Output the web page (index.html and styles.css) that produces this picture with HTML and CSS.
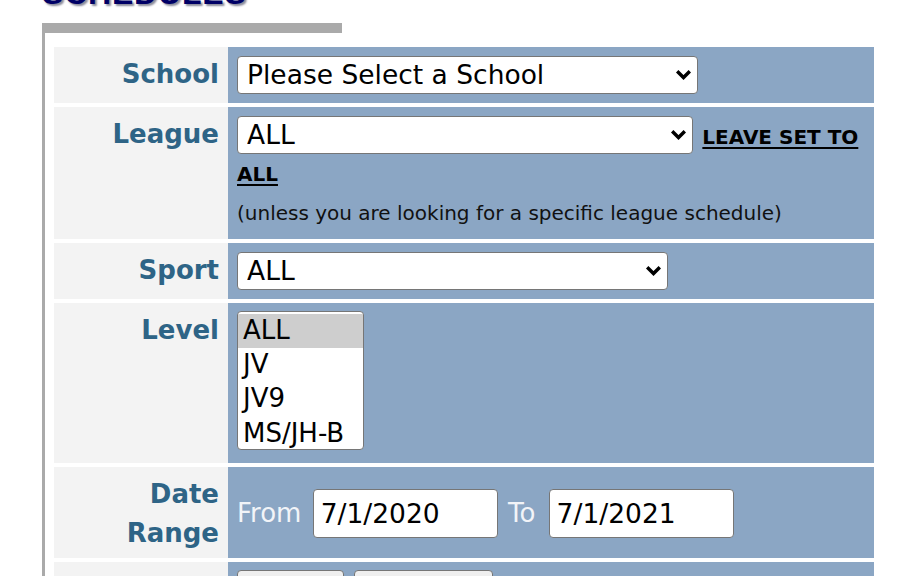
FILE: index.html
```html
<!DOCTYPE html>
<html>
<head>
<meta charset="utf-8">
<link rel="stylesheet" href="styles.css">
</head>
<body>
<h1 class="page-title">SCHEDULES</h1>
<div class="panel-bar"></div>
<div class="panel">
  <table class="search">
    <tr>
      <td class="lbl">School</td>
      <td class="val">
        <span class="sel sel-block sel-school">
          <select class="dd"><option>Please Select a School</option></select>
          <svg class="chev" viewBox="0 0 17 11" width="17" height="11"><path d="M2.2 2.2 L8.5 8.5 L14.8 2.2" fill="none" stroke="#000" stroke-width="3.4"/></svg>
        </span>
      </td>
    </tr>
    <tr>
      <td class="lbl">League</td>
      <td class="val league">
        <span class="sel sel-league">
          <select class="dd"><option>ALL</option></select>
          <svg class="chev" viewBox="0 0 17 11" width="17" height="11"><path d="M2.2 2.2 L8.5 8.5 L14.8 2.2" fill="none" stroke="#000" stroke-width="3.4"/></svg>
        </span>
        <a class="leave" href="#">LEAVE SET TO ALL</a><br>
        <span class="note">(unless you are looking for a specific league schedule)</span>
      </td>
    </tr>
    <tr>
      <td class="lbl">Sport</td>
      <td class="val">
        <span class="sel sel-block sel-sport">
          <select class="dd"><option>ALL</option></select>
          <svg class="chev" viewBox="0 0 17 11" width="17" height="11"><path d="M2.2 2.2 L8.5 8.5 L14.8 2.2" fill="none" stroke="#000" stroke-width="3.4"/></svg>
        </span>
      </td>
    </tr>
    <tr>
      <td class="lbl">Level</td>
      <td class="val level">
        <select class="listbox" size="4" multiple>
          <option selected>ALL</option>
          <option>JV</option>
          <option>JV9</option>
          <option>MS/JH-B</option>
        </select>
      </td>
    </tr>
    <tr>
      <td class="lbl">Date<br>Range</td>
      <td class="val dates">
        <span class="dlabel">From</span>
        <input class="date" type="text" value="7/1/2020">
        <span class="dlabel dlabel-to">To</span>
        <input class="date" type="text" value="7/1/2021">
      </td>
    </tr>
    <tr>
      <td class="lbl"></td>
      <td class="val buttons">
        <button class="btn btn-a" type="button">Search</button>
        <button class="btn btn-b" type="button">Clear Form</button>
      </td>
    </tr>
  </table>
</div>
</body>
</html>
```

FILE: styles.css
```css
html, body {
  margin: 0;
  padding: 0;
  background: #ffffff;
  font-family: "DejaVu Sans", Verdana, sans-serif;
  overflow: hidden;
}

.page-title {
  margin: -27px 0 10px 42px;
  font-family: "Liberation Sans", Arial, sans-serif;
  font-weight: 900;
  font-size: 32px;
  line-height: 40px;
  letter-spacing: 0.8px;
  color: #000066;
  text-shadow: 2px 2px 2px #8a8a9a;
}

.panel-bar {
  margin-left: 42px;
  width: 300px;
  height: 10px;
  background: #aaaaaa;
}

.panel {
  margin-left: 42px;
  border-left: 3px solid #aaaaaa;
  padding: 10px 0 0 9px;
}

.search {
  width: 820px;
  border-collapse: separate;
  border-spacing: 0 4px;
}

.lbl {
  width: 174px;
  box-sizing: border-box;
  background: #f3f3f3;
  color: #2e6486;
  font-weight: bold;
  font-size: 26px;
  line-height: 39px;
  text-align: right;
  vertical-align: top;
  padding: 8px 9px 5px 0;
}

.val {
  background: #8ba6c4;
  vertical-align: middle;
  padding: 9px 9px 9px 9px;
  font-size: 20px;
  line-height: 37px;
  color: #000;
}

.sel {
  position: relative;
  display: inline-block;
  vertical-align: baseline;
}

.sel-block {
  display: block;
  width: fit-content;
}

.dd {
  appearance: none;
  -webkit-appearance: none;
  display: block;
  box-sizing: border-box;
  height: 38px;
  margin: 0;
  padding: 0 30px 0 9px;
  border: 1px solid #767676;
  border-radius: 4px;
  background: #ffffff;
  color: #000;
  font-family: "DejaVu Sans", Verdana, sans-serif;
  font-size: 26.5px;
  line-height: 36px;
}

.sel-school .dd { width: 461px; }
.sel-league .dd { width: 456px; }
.sel-sport .dd { width: 431px; }

.chev {
  position: absolute;
  right: 6px;
  top: 13px;
}

.league {
  padding-bottom: 7px;
}

.league .sel {
  display: inline-block;
}

.league .sel .dd {
  display: inline-block;
  vertical-align: baseline;
}

.leave {
  margin-left: 3px;
  color: #000;
  font-weight: bold;
  text-decoration: underline;
  text-underline-offset: 3px;
  text-decoration-thickness: 2px;
}

.note {
  display: inline-block;
  margin-top: 2px;
  color: #111;
}

.level {
  vertical-align: top;
  padding: 8px 9px 13px 9px;
}

.listbox {
  display: block;
  box-sizing: border-box;
  width: 127px;
  height: 139px;
  margin: 0;
  padding: 2px 0 0 0;
  border: 1px solid #767676;
  border-radius: 4px;
  background: #ffffff;
  color: #000;
  font-family: "DejaVu Sans", Verdana, sans-serif;
  font-size: 26px;
  overflow: hidden;
}

.listbox option {
  padding: 1px 4px 2px 5px;
  color: #000;
}

.listbox option:checked {
  background: #cecece;
  color: #000;
}

.dates {
  font-size: 26px;
  line-height: 49px;
}

.dlabel {
  color: #f2f4f8;
  vertical-align: middle;
}

.dlabel-to {
  margin-left: 2px;
}

.date {
  box-sizing: border-box;
  width: 185px;
  height: 49px;
  margin: 0 0 0 3px;
  padding: 0 7px;
  border: 1px solid #767676;
  border-radius: 4px;
  background: #ffffff;
  color: #000;
  font-family: "DejaVu Sans", Verdana, sans-serif;
  font-size: 26.5px;
  vertical-align: middle;
}

.date + .dlabel-to + .date {
  margin-left: 5px;
}

.buttons {
  vertical-align: top;
  padding: 8px 9px;
  line-height: normal;
}

.btn {
  box-sizing: border-box;
  height: 46px;
  margin: 0;
  padding: 0;
  border: 1px solid #767676;
  border-radius: 4px;
  background: #efefef;
  color: #000;
  font-family: "DejaVu Sans", Verdana, sans-serif;
  font-size: 22px;
  white-space: nowrap;
  overflow: hidden;
  vertical-align: top;
}

.btn-a { width: 107px; margin-right: 4px; }
.btn-b { width: 139px; }
```
